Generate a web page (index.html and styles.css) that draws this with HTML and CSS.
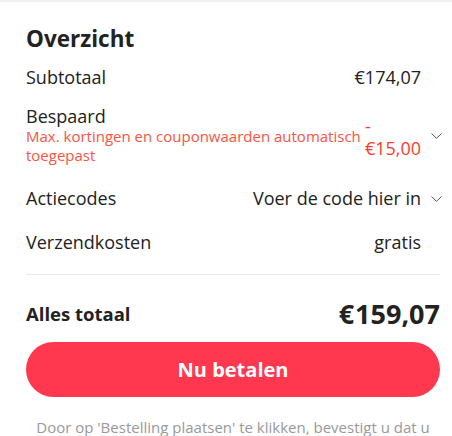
FILE: index.html
```html
<!DOCTYPE html>
<html lang="nl">
<head>
<meta charset="utf-8">
<link rel="stylesheet" href="styles.css">
</head>
<body>
<div class="topline"></div>
<section class="summary">
  <h2 class="title">Overzicht</h2>
  <div class="row first">
    <div class="label">Subtotaal</div>
    <div class="value">€174,07</div>
    <div class="chev"></div>
  </div>
  <div class="row saved">
    <div class="label">
      <div class="main">Bespaard</div>
      <div class="sub">Max. kortingen en couponwaarden automatisch toegepast</div>
    </div>
    <div class="value red">-€15,00</div>
    <div class="chev"><svg width="11" height="6" viewBox="0 0 11 6"><path d="M0.5 0.5 L5.5 5.3 L10.5 0.5" fill="none" stroke="#555" stroke-width="1"/></svg></div>
  </div>
  <div class="row codes">
    <div class="label">Actiecodes</div>
    <div class="value">Voer de code hier in</div>
    <div class="chev"><svg width="11" height="6" viewBox="0 0 11 6"><path d="M0.5 0.5 L5.5 5.3 L10.5 0.5" fill="none" stroke="#555" stroke-width="1"/></svg></div>
  </div>
  <div class="row ship">
    <div class="label">Verzendkosten</div>
    <div class="value">gratis</div>
    <div class="chev"></div>
  </div>
  <div class="divider"></div>
  <div class="total">
    <div class="tlabel">Alles totaal</div>
    <div class="tvalue"><span class="cur">€</span>159,07</div>
  </div>
  <button class="pay">Nu betalen</button>
  <p class="note">Door op 'Bestelling plaatsen' te klikken, bevestigt u dat u</p>
</section>
</body>
</html>
```
FILE: styles.css
```css
html, body {
  margin: 0;
  padding: 0;
  background: #fff;
  font-family: "Open Sans", "Noto Sans", sans-serif;
  color: #222;
  overflow: hidden;
}
.topline {
  height: 2px;
  background: #f0f0f0;
}
.summary {
  padding: 0 12px 0 26px;
}
.title {
  margin: 0;
  padding-top: 22px;
  font-size: 22.5px;
  font-weight: 700;
  line-height: 30px;
}
.row {
  display: flex;
  align-items: flex-start;
  font-size: 18px;
  line-height: 24px;
}
.row.first { margin-top: 11px; }
.row.saved { margin-top: 16px; }
.row.codes { margin-top: 21px; }
.row.ship { margin-top: 20px; }
.label {
  flex: 1 1 auto;
  min-width: 0;
}
.value {
  flex: 0 1 auto;
  text-align: right;
}
.chev {
  flex: 0 0 19px;
  display: flex;
  justify-content: flex-end;
  padding-top: 10px;
}
.saved .main { line-height: 22px; }
.saved .chev {
  flex-basis: 21px;
  margin-right: -2px;
  padding-top: 28px;
}
.codes .chev {
  flex-basis: 21px;
  margin-right: -2px;
}
.saved .value {
  flex: 0 0 56px;
  padding-top: 10px;
  line-height: 22px;
  text-align: left;
}
.sub {
  color: #fa5442;
  font-size: 15px;
  line-height: 19px;
}
.red { color: #ff3b2c; }
.divider {
  height: 1px;
  background: #ececec;
  margin-top: 20px;
}
.total {
  display: flex;
  justify-content: space-between;
  align-items: center;
  height: 34px;
  margin-top: 21px;
}
.tlabel {
  font-size: 18.5px;
  font-weight: 700;
}
.tvalue {
  font-size: 27px;
  font-weight: 700;
}
.cur {
  margin-right: 1px;
}
.pay {
  display: block;
  width: 100%;
  height: 55px;
  margin-top: 12px;
  border: none;
  border-radius: 28px;
  background: #ff374f;
  color: #fff;
  font-family: inherit;
  font-size: 20px;
  font-weight: 700;
}
.note {
  margin: 20px 0 0;
  text-align: center;
  color: #999;
  font-size: 15px;
  line-height: 20px;
  white-space: nowrap;
}
```
